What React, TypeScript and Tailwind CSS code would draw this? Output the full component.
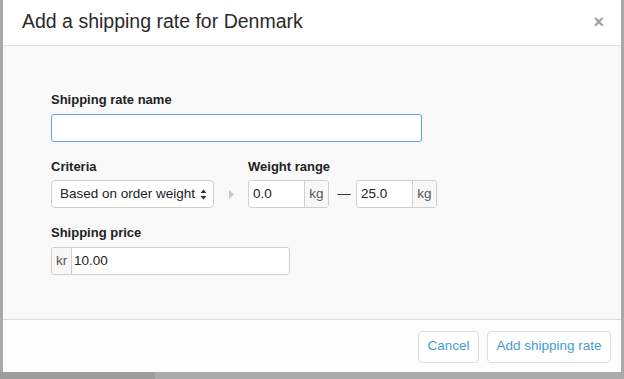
import React from "react";

function Arrows() {
  return (
    <svg width="7" height="11" viewBox="0 0 7 11" className="shrink-0">
      <path d="M3.5 0.5 L6.5 4 L0.5 4 Z" fill="#333" />
      <path d="M3.5 10.5 L6.5 7 L0.5 7 Z" fill="#333" />
    </svg>
  );
}

export default function App() {
  return (
    <div
      className="w-[624px] h-[379px] bg-[#a0a0a0] overflow-hidden flex flex-col"
      style={{ fontFamily: '"Liberation Sans", Arial, sans-serif' }}
    >
      <div className="flex">
        <div className="w-[3px] h-[372px] bg-[#a8a8a8]" />
        <div className="w-[618px] h-[372px] bg-white flex flex-col">
          {/* header */}
          <div className="h-[46px] border-b border-[#dfdfdf] flex items-center justify-between pl-[19px] pr-[17px] bg-white">
            <span className="text-[19.5px] text-[#2a2a2a] leading-none mt-[-1px]">
              Add a shipping rate for Denmark
            </span>
            <span className="text-[#a0a0a0] text-[18px] font-bold leading-none mt-[-1px]">×</span>
          </div>
          {/* body */}
          <div className="flex-1 bg-[#f9f9f9] pl-[48px] pt-[46px] text-[13px] text-[#222]">
            <div className="font-bold leading-[16px] mb-[6px]">Shipping rate name</div>
            <div className="w-[371px] h-[28px] rounded-[3px] border border-[#5fa3dc] bg-white" />

            <div className="flex mt-[17px]">
              <div className="flex flex-col">
                <div className="font-bold leading-[16px] mb-[5px]">Criteria</div>
                <div className="w-[163px] h-[28px] rounded-[4px] border border-[#cfcfcf] bg-white flex items-center justify-between pl-[8px] pr-[6px] text-[13.5px] text-[#222]">
                  <span>Based on order weight</span>
                  <Arrows />
                </div>
              </div>
              <div className="w-[34px] flex items-end justify-center pb-[9px]">
                <svg width="5" height="9" viewBox="0 0 5 9">
                  <path d="M0 0 L5 4.5 L0 9 Z" fill="#c8c8c8" />
                </svg>
              </div>
              <div className="flex flex-col">
                <div className="font-bold leading-[16px] mb-[5px]">Weight range</div>
                <div className="flex items-center">
                  <div className="flex h-[28px] w-[81px] rounded-[3px] border border-[#cfcfcf] bg-white overflow-hidden text-[13.5px]">
                    <div className="flex-1 flex items-center pl-[4px] text-[#222]">0.0</div>
                    <div className="w-[24px] border-l border-[#cfcfcf] bg-[#f7f7f7] flex items-center justify-center text-[#555]">kg</div>
                  </div>
                  <span className="w-[27px] pl-[3px] text-center text-[#333] text-[13px]">—</span>
                  <div className="flex h-[28px] w-[81px] rounded-[3px] border border-[#cfcfcf] bg-white overflow-hidden text-[13.5px]">
                    <div className="flex-1 flex items-center pl-[4px] text-[#222]">25.0</div>
                    <div className="w-[24px] border-l border-[#cfcfcf] bg-[#f7f7f7] flex items-center justify-center text-[#555]">kg</div>
                  </div>
                </div>
              </div>
            </div>

            <div className="font-bold leading-[16px] mt-[17px] mb-[6px]">Shipping price</div>
            <div className="flex h-[28px] w-[239px] rounded-[3px] border border-[#cfcfcf] bg-white overflow-hidden text-[13.5px]">
              <div className="w-[20px] border-r border-[#cfcfcf] bg-[#f7f7f7] flex items-center justify-center text-[#555]">kr</div>
              <div className="flex-1 flex items-center pl-[2px] text-[#222]">10.00</div>
            </div>
          </div>
          {/* footer */}
          <div className="h-[53px] border-t border-[#dcdcdc] bg-[#fcfcfc] flex items-center justify-end gap-[8px] pr-[10px] pt-[1px]">
            <button className="h-[32px] w-[61px] rounded-[4px] border border-[#dddddd] bg-white text-[13.5px] text-[#479ccf]">
              Cancel
            </button>
            <button className="h-[32px] w-[124px] rounded-[4px] border border-[#dddddd] bg-white text-[13.5px] text-[#479ccf]">
              Add shipping rate
            </button>
          </div>
        </div>
        <div className="w-[3px] h-[372px] bg-[#a8a8a8]" />
      </div>
      <div className="flex-1 flex">
        <div className="w-[155px] bg-[#9c9c9c]" />
        <div className="flex-1 bg-[#ababab]" />
      </div>
    </div>
  );
}
